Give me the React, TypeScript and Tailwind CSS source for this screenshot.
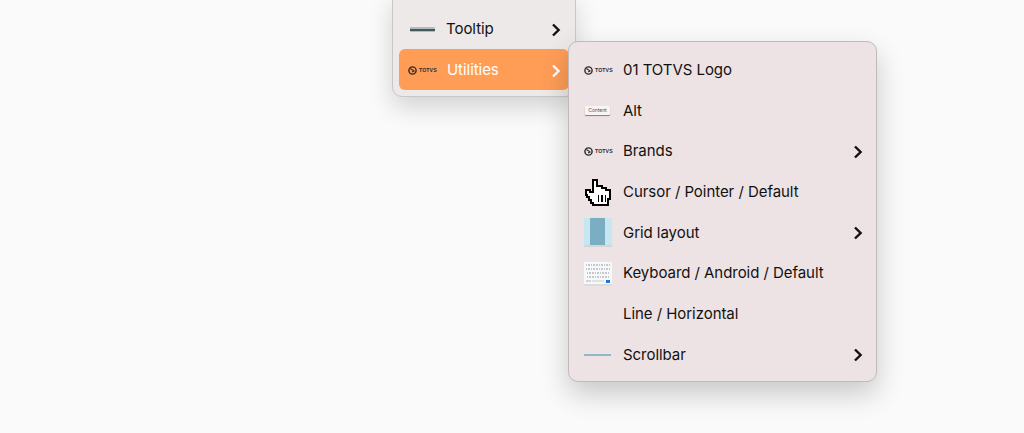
function Chevron({ className = 'text-[#111]' }: { className?: string }) {
  return (
    <svg viewBox="0 0 10 14" className={`ml-auto h-[14px] w-[10px] shrink-0 ${className}`} fill="none" stroke="currentColor" strokeWidth="2.4">
      <path d="M2 1.5 L7.6 7 L2 12.5" />
    </svg>
  )
}

function TotvsLogo() {
  return (
    <div className="flex items-center gap-[2px] text-[#2b2b2b]">
      <svg viewBox="0 0 10 10" className="h-[9px] w-[9px] shrink-0" fill="none" stroke="currentColor">
        <circle cx="5" cy="5" r="4" strokeWidth="1.6" />
        <path d="M2.6 2.8 L6.6 5.4 L4.6 6.6" strokeWidth="1.3" />
      </svg>
      <span
        className="text-[5.2px] leading-none font-bold tracking-[0.1px]"
        style={{ fontFamily: '"Liberation Sans", sans-serif' }}
      >
        TOTVS
      </span>
    </div>
  )
}

function AltIcon() {
  return (
    <div className="ml-px flex h-[9px] w-[25px] items-center justify-center rounded-[1px] bg-[#f7f5f5] text-[5px] leading-none text-[#555] shadow-[0_1px_1px_rgba(0,0,0,0.45)]">
      Content
    </div>
  )
}

function PointerIcon() {
  return (
    <svg viewBox="0 0 27 27" className="ml-px h-[27px] w-[27px]" shapeRendering="crispEdges">
      <path
        d="M8 1H12V7H17V9H21V11H25V20H23V26H8V24H6V21H4V18H2V16H1V11H5V13H8Z"
        fill="#fff"
        stroke="#000"
        strokeWidth="2"
      />
      <path d="M13.5 16V23M17 16V23M20.5 16V23" stroke="#000" strokeWidth="1.5" fill="none" />
    </svg>
  )
}

function GridIcon() {
  return (
    <div className="flex h-[29px] w-[28px] border-b-2 border-[#d5d5d8] bg-[#c6e7f0]">
      <div className="ml-[6px] h-full w-[15px] bg-[#7caec3]" />
    </div>
  )
}

function KeyboardIcon() {
  const rows = [10, 10, 9, 9]
  return (
    <div className="flex h-[24px] w-[28px] flex-col gap-[2px] border-b-2 border-[#dcdcdc] bg-[#f7f8fa] px-[1px] pt-[2px]">
      {rows.map((count, i) => (
        <div key={i} className="flex justify-center gap-[1px]">
          {Array.from({ length: count }).map((_, j) => (
            <div key={j} className="h-[2px] w-[1.6px] bg-[#c4c7cc]" />
          ))}
        </div>
      ))}
      <div className="flex items-center gap-[1px] px-[1px]">
        <div className="h-[2px] w-[5px] bg-[#d0d3d7]" />
        <div className="h-[2px] w-[12px] bg-[#e0e2e6]" />
        <div className="ml-auto h-[3px] w-[4px] bg-[#1a73e8]" />
      </div>
    </div>
  )
}

const subItems = [
  { label: '01 TOTVS Logo', icon: <TotvsLogo /> },
  { label: 'Alt', icon: <AltIcon /> },
  { label: 'Brands', icon: <TotvsLogo />, more: true },
  { label: 'Cursor / Pointer / Default', icon: <PointerIcon /> },
  { label: 'Grid layout', icon: <GridIcon />, more: true },
  { label: 'Keyboard / Android / Default', icon: <KeyboardIcon /> },
  { label: 'Line / Horizontal', icon: <div className="h-[2px] w-[27px] bg-[#ebe5e6]" /> },
  { label: 'Scrollbar', icon: <div className="h-[2px] w-[27px] bg-[#8fb8c9]" />, more: true },
]

export default function App() {
  return (
    <div
      className="flex h-[433px] w-[1024px] items-start overflow-hidden bg-[#fafafa] pl-[392px] text-[15px] tracking-[-0.05px] text-[#111]"
      style={{ fontFamily: 'Inter, "Liberation Sans", sans-serif' }}
    >
      <div className="mt-[-8px] w-[184px] rounded-[10px] border border-[#c9c6c5] bg-[#ece9e8] px-[6px] pt-[15px] pb-[6px] shadow-[0_10px_24px_rgba(0,0,0,0.16)]">
        <div className="flex h-[41px] items-center pt-[2px] pr-[8px]">
          <div className="ml-[11px] flex w-[36px] items-center">
            <div className="flex h-[5px] w-[25px] items-center rounded-[1px] bg-[#b4bbbb]">
              <div className="h-[2px] w-full bg-[#43585c]" />
            </div>
          </div>
          <span>Tooltip</span>
          <Chevron />
        </div>
        <div className="flex h-[41px] items-center rounded-[6px] bg-[#ff9d57] pt-[2px] pr-[8px] text-white">
          <div className="ml-[9px] w-[39px]">
            <TotvsLogo />
          </div>
          <span>Utilities</span>
          <Chevron className="text-white" />
        </div>
      </div>

      <div className="relative mt-[41px] ml-[-8px] h-[341px] w-[309px] rounded-[10px] border border-[#c2b9ba] bg-[#eee3e4] pt-[8px] pr-[13px] pl-[15px] shadow-[0_12px_28px_rgba(0,0,0,0.2)]">
        {subItems.map(item => (
          <div key={item.label} className="flex h-[40.67px] items-center">
            <div className="flex w-[39px] shrink-0 items-center">{item.icon}</div>
            <span>{item.label}</span>
            {item.more && <Chevron />}
          </div>
        ))}
      </div>
    </div>
  )
}
